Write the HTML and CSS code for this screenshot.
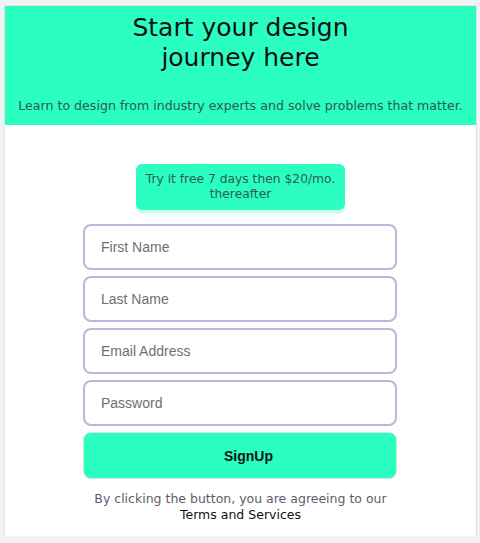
FILE: index.html
```html
<!DOCTYPE html>
<html>
<head>
<meta charset="utf-8">
<link rel="stylesheet" href="styles.css">
</head>
<body>
<div class="card">
  <header class="hero">
    <h1 class="title">Start your design<br>journey here</h1>
    <p class="lead">Learn to design from industry experts and solve problems that matter.</p>
  </header>
  <main class="content">
    <div class="trial">Try it free 7 days then $20/mo.<br>thereafter</div>
    <form class="form">
      <input class="field" type="text" placeholder="First Name">
      <input class="field" type="text" placeholder="Last Name">
      <input class="field" type="email" placeholder="Email Address">
      <input class="field" type="password" placeholder="Password">
      <button class="submit" type="button">SignUp</button>
    </form>
    <p class="terms">By clicking the button, you are agreeing to our<br><span class="terms-link">Terms and Services</span></p>
  </main>
</div>
</body>
</html>
```
FILE: styles.css
```css
html, body {
  margin: 0;
  padding: 0;
  background: #f1f2f3;
}
body {
  padding: 5px 3px 0 4px;
  font-family: "DejaVu Sans", sans-serif;
}
.card {
  background: #ffffff;
  border: 1px solid #e2e3e4;
  border-bottom: none;
  height: 531px;
  box-sizing: border-box;
}
.hero {
  background: #2affc1;
  height: 119px;
  box-sizing: border-box;
  padding-top: 7px;
  text-align: center;
}
.title {
  margin: 0;
  font-weight: 400;
  font-size: 25px;
  line-height: 30px;
  color: #111;
}
.lead {
  margin: 25px 0 0;
  font-size: 12.6px;
  line-height: 16px;
  color: #2c5b4e;
}
.content {
  display: flex;
  flex-direction: column;
  align-items: center;
  padding-top: 39px;
}
.trial {
  width: 209px;
  box-sizing: border-box;
  background: #2affc1;
  border-radius: 6px;
  box-shadow: 0 4px 0 #d6fdf0;
  padding: 8px 4px;
  text-align: center;
  font-size: 12.3px;
  line-height: 15px;
  color: #2a5d4c;
}
.form {
  margin-top: 14px;
  margin-left: -1px;
  width: 314px;
  display: flex;
  flex-direction: column;
  gap: 6px;
}
.field {
  height: 46px;
  box-sizing: border-box;
  border: 2px solid #bdb6dc;
  border-radius: 8px;
  padding: 0 16px;
  font-family: "Liberation Sans", Arial, sans-serif;
  font-size: 14px;
  color: #333;
  background: #fff;
  outline: none;
}
.field::placeholder {
  color: #6f6f6f;
}
.submit {
  height: 47px;
  border: 1px solid #c9e9df;
  border-radius: 8px;
  background: #2affc1;
  padding: 0 0 0 17px;
  font-family: "Liberation Sans", Arial, sans-serif;
  font-weight: 700;
  font-size: 14px;
  color: #111;
}
.terms {
  margin: 12px 0 0;
  text-align: center;
  font-size: 12.5px;
  line-height: 16px;
  color: #5d5d6a;
}
.terms-link {
  color: #111;
}
```
